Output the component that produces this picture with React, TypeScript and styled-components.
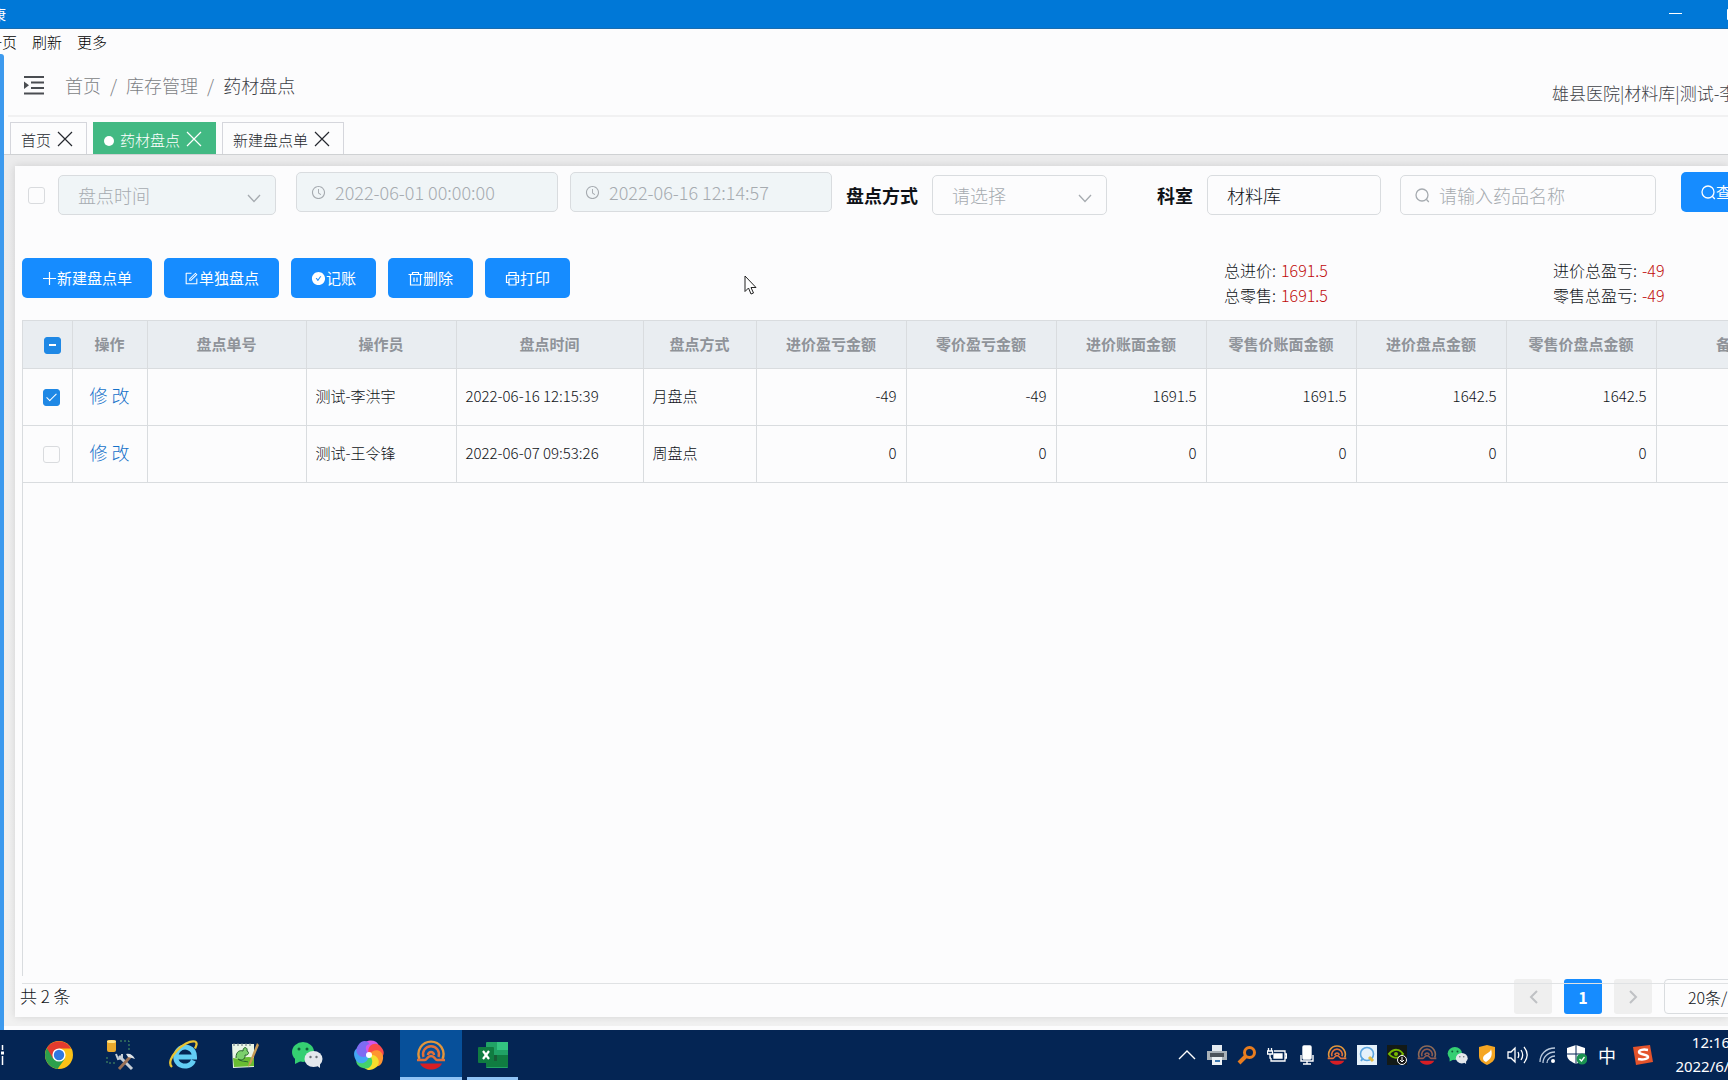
import React from 'react';
import styled, { createGlobalStyle, css } from 'styled-components';
import { AiOutlineForm, AiFillCheckCircle, AiOutlineClockCircle } from 'react-icons/ai';

const blue = '#168cff';
const line = '#d9dcdf';
const muted = '#a6abb0';

const GlobalStyle = createGlobalStyle`
  *, *::before, *::after { box-sizing: border-box; }
  body {
    margin: 0;
    background: #fcfcfd;
    color: #0f1217;
    font-family: "Noto Sans CJK SC", "Noto Sans", sans-serif;
    font-size: 15px;
    font-weight: 300;
    line-height: 24px;
  }
  button, input, select { font: inherit; color: inherit; margin: 0; }
`;

const Shell = styled.div`
  display: flex;
  flex-direction: column;
  min-height: 100vh;
  overflow: hidden;
  white-space: nowrap;
`;

const TitleBar = styled.header`
  display: flex;
  justify-content: space-between;
  align-items: center;
  height: 29px;
  background: #0078d7;
  color: #fff;
  font-weight: 400;
  border-bottom: 1px solid #1a6cae;
`;
const WindowTitle = styled.span`
  margin-left: -9px;
`;
const WindowButtons = styled.div`
  display: flex;
  align-items: center;
  gap: 45px;
  margin-right: -12px;
`;
const WindowButton = styled.button`
  display: flex;
  padding: 0;
  border: 0;
  background: none;
`;

const MenuBar = styled.nav`
  display: flex;
  align-items: center;
  gap: 15px;
  height: 25px;
  margin-left: -28px;
`;
const MenuItem = styled.button`
  padding: 0;
  border: 0;
  background: none;
  color: #000;
`;

const Workspace = styled.div`
  display: flex;
  flex: 1;
`;
const SideStrip = styled.aside`
  flex: none;
  width: 4px;
  background: #3d9aee;
  border-top-right-radius: 3px;
`;
const Main = styled.main`
  display: flex;
  flex-direction: column;
  flex: 1;
  min-width: 0;
`;

const PageHeader = styled.div`
  display: flex;
  align-items: center;
  gap: 20px;
  height: 63px;
  margin-left: 4px;
  padding: 1px 0 0 16px;
  border-bottom: 2px solid #f1f1f2;
`;
const IconButton = styled.button`
  display: flex;
  padding: 0;
  border: 0;
  background: none;
  color: #4a4d52;
`;
const Breadcrumb = styled.ol`
  display: flex;
  flex: 1;
  gap: 9px;
  margin: 0;
  padding: 0;
  list-style: none;
  font-size: 18px;
`;
const Crumb = styled.li<{ $current?: boolean }>`
  display: flex;
  gap: 9px;
  color: ${p => (p.$current ? '#3d4046' : '#7c7f85')};
  &:not(:last-child)::after { content: "/"; }
  a { color: inherit; text-decoration: none; }
`;
const UserName = styled.span`
  flex: none;
  width: 176px;
  padding-top: 16px;
  font-size: 17px;
  color: #3f4248;
`;

const TabBar = styled.div`
  display: flex;
  align-items: flex-end;
  gap: 6px;
  height: 38px;
  padding-left: 6px;
  border-bottom: 1px solid #cfd1d3;
`;
const Tab = styled.div<{ $active?: boolean }>`
  display: flex;
  align-items: center;
  gap: 6px;
  height: 32px;
  padding: 3px 13px 0 10px;
  border: 1px solid ${p => (p.$active ? '#42b983' : '#d5d6dc')};
  border-bottom-width: 0;
  background: ${p => (p.$active ? '#42b983' : '#fcfcfd')};
  color: ${p => (p.$active ? '#fff' : '#25282e')};
`;
const Dot = styled.span`
  width: 10px;
  height: 10px;
  margin-top: 2px;
  border-radius: 50%;
  background: #fff;
`;
const CloseButton = styled.button`
  display: flex;
  padding: 0 0 3px;
  border: 0;
  background: none;
`;

const Content = styled.div`
  display: flex;
  flex: 1;
  padding: 11px 0 9px 11px;
  margin-bottom: 4px;
  background: linear-gradient(#ebebec, #f1f1f1);
`;
const Card = styled.section`
  display: flex;
  flex-direction: column;
  flex: 1;
  min-width: 0;
  padding: 6px 0 3px 7px;
  background: #fcfcfd;
  box-shadow: 0 0 8px rgba(0, 0, 0, 0.12);
`;

const Filters = styled.form`
  display: flex;
  height: 86px;
  padding-left: 6px;
  font-size: 18px;
`;
const Lowered = styled.div`
  display: flex;
  align-items: center;
  flex: none;
  height: 40px;
  margin-top: 3px;
`;
const FieldLabel = styled.label`
  margin: 0 14px;
  font-weight: 700;
`;
const Field = styled.div<{ $width: number; $disabled?: boolean }>`
  display: flex;
  align-items: center;
  flex: none;
  gap: 9px;
  width: ${p => p.$width}px;
  height: 40px;
  padding-left: 14px;
  border: 1px solid ${line};
  border-radius: 5px;
  background: ${p => (p.$disabled ? '#f0f5f7' : '#fcfcfd')};
  color: ${muted};
  svg { flex: none; }
`;
const TextInput = styled.input`
  flex: 1;
  min-width: 0;
  padding: 0;
  border: 0;
  outline: 0;
  background: none;
  &:disabled { color: ${muted}; }
  &::placeholder { color: ${muted}; opacity: 1; }
`;
const PlainInput = styled.input`
  width: 174px;
  height: 40px;
  padding: 0 19px;
  border: 1px solid ${line};
  border-radius: 5px;
  background: #fcfcfd;
`;
const SelectBox = styled.div<{ $width: number }>`
  display: grid;
  align-items: center;
  width: ${p => p.$width}px;
  > * { grid-area: 1 / 1; }
  > svg { justify-self: end; margin: 6px 15px 0 0; pointer-events: none; color: ${muted}; }
`;
const Select = styled.select`
  width: 100%;
  height: 40px;
  padding: 0 19px;
  border: 1px solid ${line};
  border-radius: 5px;
  appearance: none;
  background: #fcfcfd;
  color: ${muted};
  opacity: 1;
  &:disabled { background: #f0f5f7; opacity: 1; }
`;
const Gap = styled.div<{ $w: number }>`
  flex: none;
  width: ${p => p.$w}px;
`;

const Check = styled.input<{ $partial?: boolean }>`
  display: grid;
  place-items: center;
  flex: none;
  width: 17px;
  height: 17px;
  appearance: none;
  border: 1px solid #d9dbde;
  border-radius: 3px;
  background: #fcfcfd;
  &:checked { background: #1f88e5; border-color: #1f88e5; }
  &:checked::after {
    content: "";
    width: 5px;
    height: 10px;
    margin-bottom: 3px;
    border: solid #fff;
    border-width: 0 1px 1px 0;
    transform: rotate(45deg);
  }
  ${p => p.$partial && css`
    background: #1f88e5;
    border-color: #1f88e5;
    &::after { content: ""; width: 7px; height: 2px; background: #fff; }
  `}
`;

const PrimaryButton = styled.button`
  display: flex;
  align-items: center;
  flex: none;
  height: 40px;
  padding: 0 20px;
  border: 0;
  border-radius: 5px;
  background: ${blue};
  color: #fff;
  font-size: 15px;
  font-weight: 400;
`;

const Toolbar = styled.div`
  display: flex;
  align-items: center;
  height: 40px;
  margin-bottom: 22px;
`;
const Actions = styled.div`
  display: flex;
  flex: 1;
  gap: 12px;
`;
const Totals = styled.dl<{ $width: number }>`
  flex: none;
  width: ${p => p.$width}px;
  margin: 10px 0 0;
  font-size: 16px;
  line-height: 25px;
  div { display: flex; gap: 5px; }
  dd { margin: 0; color: #c00a0a; }
`;

const TableArea = styled.div`
  position: relative;
  z-index: 1;
  display: flex;
  flex: 1;
  padding-bottom: 7px;
  border-bottom: 1px solid #e0e2e4;
  pointer-events: none;
`;
const TableScroll = styled.div`
  flex: 1;
  min-width: 0;
  overflow: hidden;
  border-left: 1px solid ${line};
  pointer-events: auto;
`;
const Table = styled.table`
  width: 100%;
  min-width: 1783px;
  table-layout: fixed;
  border-collapse: collapse;
  th, td { border-right: 1px solid ${line}; border-bottom: 1px solid ${line}; }
`;
const Th = styled.th`
  height: 48px;
  padding: 0 0 2px;
  border-top: 1px solid ${line};
  background: #e9edf1;
  color: #8f9399;
  font-weight: 700;
`;
const Td = styled.td<{ $align?: string }>`
  height: 57px;
  padding: 0 9px 3px;
  text-align: ${p => p.$align || 'left'};
`;
const CheckCell = styled.div<{ $head?: boolean }>`
  display: flex;
  padding: 3px 0 0 ${p => (p.$head ? 21 : 11)}px;
`;
const EditLink = styled.a`
  color: #1571c9;
  font-size: 18px;
  text-decoration: none;
`;

const Footer = styled.footer`
  display: flex;
  align-items: center;
  height: 35px;
  margin-top: -5px;
  font-size: 16px;
`;
const Count = styled.span`
  flex: 1;
  margin-left: -2px;
  padding-bottom: 2px;
  font-size: 17px;
`;
const Pager = styled.nav`
  display: flex;
  flex: none;
  gap: 12px;
  width: 214px;
`;
const PageButton = styled.button<{ $active?: boolean }>`
  display: flex;
  align-items: center;
  justify-content: center;
  flex: none;
  width: 38px;
  height: 35px;
  padding: 0;
  border: 0;
  border-radius: 3px;
  background: ${p => (p.$active ? blue : '#efefef')};
  color: ${p => (p.$active ? '#fff' : '#bfc1c4')};
  font-weight: 700;
`;
const PageSize = styled.select`
  flex: none;
  width: 125px;
  height: 35px;
  padding-left: 23px;
  border: 1px solid ${line};
  border-radius: 4px;
  appearance: none;
  background: #fcfcfd;
`;

const Taskbar = styled.footer`
  display: flex;
  align-items: center;
  justify-content: space-between;
  height: 50px;
  background: #042554;
  color: #fff;
`;
const Apps = styled.div`
  display: flex;
  height: 50px;
`;
const AppButton = styled.button<{ $active?: boolean; $open?: boolean; $width?: number }>`
  display: flex;
  align-items: center;
  justify-content: center;
  width: ${p => p.$width || 62}px;
  padding: 0;
  border: 0;
  background: ${p => (p.$active ? '#07509a' : 'none')};
  ${p => (p.$active || p.$open) && css`border-bottom: 3px solid #8fc3f5; padding-top: 3px;`}
`;
const Tray = styled.div`
  display: flex;
  align-items: center;
  margin-right: -21px;
`;
const TrayIcon = styled.button<{ $wide?: boolean }>`
  display: flex;
  align-items: center;
  justify-content: center;
  width: ${p => (p.$wide ? 42 : 30)}px;
  padding: 0;
  border: 0;
  background: none;
  font-size: 18px;
  font-weight: 400;
`;
const Clock = styled.time`
  width: 76px;
  margin-left: 9px;
  padding-bottom: 2px;
  text-align: center;
  font-family: "Noto Sans", sans-serif;
  font-size: 15px;
  font-weight: 400;
`;
const Pointer = styled.svg`
  position: absolute;
  left: 744px;
  top: 275px;
`;

const CloseIcon = () => (
  <svg width="16" height="16" viewBox="0 0 16 16" fill="none" stroke="currentColor" strokeWidth="1.2">
    <path d="M1 1l14 14M15 1L1 15" />
  </svg>
);
const ChevronIcon = () => (
  <svg width="14" height="9" viewBox="0 0 14 9" fill="none" stroke="currentColor" strokeWidth="1.3">
    <path d="M1 1l6 6.5L13 1" />
  </svg>
);
const SearchIcon = () => (
  <svg width="15" height="15" viewBox="0 0 15 15" fill="none" stroke="currentColor" strokeWidth="1.3">
    <circle cx="7" cy="7" r="6" />
    <path d="M11.3 11.3l2.5 2.7" />
  </svg>
);
const PlusIcon = () => (
  <svg width="15" height="15" viewBox="0 0 15 15" fill="none" stroke="currentColor" strokeWidth="1.2">
    <path d="M7.500 1v13M1 7.500h13" />
  </svg>
);
const EditIcon = () => <AiOutlineForm size={15} />;
const DoneIcon = () => <AiFillCheckCircle size={15} />;
const TrashIcon = () => (
  <svg width="15" height="15" viewBox="0 0 15 15" fill="none" stroke="currentColor" strokeWidth="1.2">
    <path d="M.5 3.500h14M4.500 3.500v-2h6v2M2.500 3.500v10.500h10V3.500M6 6.500v4.500M9 6.500v4.500" />
  </svg>
);
const PrintIcon = () => (
  <svg width="15" height="15" viewBox="0 0 15 15" fill="none" stroke="currentColor" strokeWidth="1.2">
    <path d="M4 4V1.500h7V4M3.500 11.500H1.500v-7h12v7h-2M4 8h7v6H4zM9.500 6.300h2" />
  </svg>
);
const FoldIcon = () => (
  <svg width="21" height="19" viewBox="0 0 21 19" fill="currentColor">
    <path d="M0 0h20v2H0zM7 5.500h13v2H7zM7 11h13v2H7zM0 16.500h20v2H0zM0 5.500l5 3.700-5 3.800z" />
  </svg>
);
const ArrowIcon = ({ back }: { back?: boolean }) => (
  <svg width="9" height="14" viewBox="0 0 9 14" fill="none" stroke="currentColor" strokeWidth="2">
    <path d={back ? 'M8 1L2 7l6 6' : 'M1 1l6 6-6 6'} />
  </svg>
);

const ChromeIcon = () => (
  <svg width="28" height="28" viewBox="0 0 28 28">
    <circle cx="14" cy="14" r="14" fill="#fbc116" />
    <path d="M14 14L1.900 7A14 14 0 0 0 12.500 27.900L20 17.500z" fill="#2da04c" />
    <path d="M1.900 7A14 14 0 0 1 26.200 7.500H14L8 17.500z" fill="#e33b2e" />
    <circle cx="14" cy="14" r="6.600" fill="#fff" />
    <circle cx="14" cy="14" r="5.200" fill="#2f78e0" />
  </svg>
);
const ToolsIcon = () => (
  <svg width="30" height="32" viewBox="0 0 30 32" fill="none">
    <path d="M14 2h9v10M1 18v6h9" stroke="#4f9a62" strokeDasharray="2 2" />
    <rect x="1" y="1" width="9" height="12" rx="2" fill="#eaa92c" />
    <ellipse cx="5.500" cy="2.500" rx="4.500" ry="1.500" fill="#ffe48a" />
    <path d="M13 17l13 13" stroke="#c7ced6" strokeWidth="3" />
    <path d="M10 15l2 5 4-1 0-4" stroke="#c7ced6" strokeWidth="2" />
    <path d="M25 17L13 30" stroke="#9a7056" strokeWidth="3" />
    <path d="M20 15c4-1 7 1 9 5l-3-1-4-1z" fill="#dfe4e9" />
  </svg>
);
const IeIcon = () => (
  <svg width="30" height="30" viewBox="0 0 30 30" fill="none">
    <path d="M25.500 20.500c-2 5-8 7-13 4.500-6-3-6-11-2-15 6-6 16-2 16 7H9" stroke="#62cdf4" strokeWidth="5" />
    <path d="M4 27C-4 20 17-1 27 1.500c3 1 1 5 0 7" stroke="#e9c332" strokeWidth="2.300" />
  </svg>
);
const NotepadIcon = () => (
  <svg width="28" height="28" viewBox="0 0 28 28">
    <path d="M1 3h22v23L2 27z" fill="#e9f5e6" />
    <path d="M2 17c7 2 13-3 21 0v8L3 26z" fill="#69bd32" />
    <path d="M3 2v3M7 2v3M11 2v3M15 2v3M19 2v3" stroke="#60717a" />
    <path d="M5 17c0-7 4-8 7-7 0-5 5-4 4 0 3 1 1 5-2 4 1 5-5 6-7 4 4 3 8 2 10 3" fill="#7bd06c" stroke="#26622c" />
    <path d="M26 2l-8 20-1 4 3-3 8-19z" fill="#c79b55" />
  </svg>
);
const WechatIcon = ({ size }: { size: number }) => (
  <svg width={size} height={size} viewBox="0 0 32 32">
    <ellipse cx="12" cy="13" rx="11" ry="10" fill="#35cf72" />
    <path d="M4 18l0 7 6-3z" fill="#35cf72" />
    <ellipse cx="22.500" cy="20" rx="9" ry="8" fill="#e4e8ec" />
    <path d="M25 26l4 3v-5z" fill="#e4e8ec" />
    <circle cx="8" cy="10" r="1.500" fill="#12613a" />
    <circle cx="16" cy="10" r="1.500" fill="#12613a" />
    <circle cx="19.500" cy="18" r="1.200" fill="#6b7278" />
    <circle cx="25.500" cy="18" r="1.200" fill="#6b7278" />
  </svg>
);
const PinwheelIcon = () => (
  <svg width="30" height="30" viewBox="-15 -15 30 30">
    {['#d657e8', '#fb4b4b', '#ff9530', '#f6dd2c', '#45d16a', '#43a6f5', '#7e6cf2'].map((fill, i) => (
      <path key={fill} d="M0 0C-9-3-8-14 1-14.500C9-15 11-9 9-6C7-9 2-8 0 0z" fill={fill} transform={`rotate(${i * 51})`} />
    ))}
    <circle r="3" fill="#fff" />
  </svg>
);
const HospitalIcon = ({ size, dim }: { size: number; dim?: boolean }) => (
  <svg width={size} height={size} viewBox="0 0 28 30" fill="none" stroke={dim ? '#8d5a50' : '#e0703a'} strokeWidth="2.400">
    <path d="M2.500 19a12.500 12.500 0 1 1 23 0" stroke={dim ? '#8d6a58' : '#e2963c'} />
    <path d="M6.500 17a8 8 0 1 1 15 0M0 20h8c2 0 2-4 6-4s4 4 6 4h8" />
    <path d="M11 15a3 3 0 0 1 6 0" />
    <path d="M3 23.500h22c-4 8-18 8-22 0z" fill="#d81e24" stroke="none" />
  </svg>
);
const ExcelIcon = () => (
  <svg width="30" height="28" viewBox="0 0 30 28">
    <rect x="8" y="1" width="22" height="26" rx="1" fill="#21a366" />
    <path d="M19 1h11v8H19z" fill="#33c481" />
    <path d="M8 14h22v12H8z" fill="#107c41" />
    <path d="M8 14h11v6H8z" fill="#185c37" />
    <rect y="6" width="16" height="16" rx="1" fill="#107c41" />
    <path d="M5 10l6 8M11 10l-6 8" stroke="#fff" strokeWidth="2.200" />
  </svg>
);
const TrayChevron = () => (
  <svg width="18" height="10" viewBox="0 0 18 10" fill="none" stroke="#fff" strokeWidth="1.400"><path d="M1 9l8-8 8 8" /></svg>
);
const TrayPrinter = () => (
  <svg width="20" height="20" viewBox="0 0 20 20">
    <path d="M5 0h10v6H5z" fill="#e4eaf0" /><path d="M0 6h20v9H0z" fill="#a9b1b8" />
    <path d="M3 8h14v4H3z" fill="#4c545c" /><path d="M5 12h10v8H5z" fill="#eef2f5" /><path d="M8 15h5v2H8z" fill="#3c78b0" />
  </svg>
);
const TrayKey = () => (
  <svg width="20" height="20" viewBox="0 0 20 20" fill="none" stroke="#e97d1f" strokeWidth="3">
    <circle cx="12.500" cy="7.500" r="5" /><path d="M9 11l-7 7" strokeWidth="4" />
  </svg>
);
const TrayBattery = () => (
  <svg width="20" height="14" viewBox="0 0 20 14" fill="none" stroke="#fff" strokeWidth="1.300">
    <path d="M7 3h11v10H4v-3M18 6h1.500v4H18M1.500 0v3M4.500 0v3M.5 3h5v3h-5zM3 6v4h1" /><path d="M7 6h8v4H7z" fill="#fff" />
  </svg>
);
const TrayMic = () => (
  <svg width="14" height="20" viewBox="0 0 14 20" fill="none" stroke="#fff" strokeWidth="1.400">
    <rect x="3" y="1" width="8" height="13" rx="1" fill="#fff" /><path d="M1 10v6h12v-6M7 16v3M3 19h8" />
  </svg>
);
const TrayQuery = () => (
  <svg width="20" height="20" viewBox="0 0 20 20" fill="none">
    <path d="M0 0h20v20H0z" fill="#e5f1fb" /><circle cx="10" cy="9" r="6.500" stroke="#5ba5df" strokeWidth="1.600" />
    <path d="M4 16l2-3" stroke="#5ba5df" strokeWidth="2" /><path d="M12 12l4 4" stroke="#e5bd43" strokeWidth="3" />
  </svg>
);
const TrayGpu = () => (
  <svg width="20" height="20" viewBox="0 0 20 20" fill="none">
    <path d="M0 0h20v20H0z" fill="#131a17" /><path d="M2 9c5-6 11-5 14 0-4 5-10 5-14 0z" stroke="#77b900" strokeWidth="2" />
    <circle cx="9" cy="9" r="2" fill="#77b900" /><circle cx="15" cy="15" r="4.500" fill="#111" stroke="#fff" /><path d="M15 12v5M13 15l2 2 2-2" stroke="#fff" />
  </svg>
);
const TrayShield = () => (
  <svg width="18" height="20" viewBox="0 0 18 20"><path d="M9 0l8 2v9c0 5-4 7-8 9-4-2-8-4-8-9V2z" fill="#f5a623" /><path d="M13 4c0 4-8 5-8 9 0 2 1 3 3 4 5-3 7-7 5-13z" fill="#fff" /></svg>
);
const TrayVolume = () => (
  <svg width="21" height="18" viewBox="0 0 21 18" fill="none" stroke="#fff" strokeWidth="1.300">
    <path d="M1 6h3l4-4v14l-4-4H1zM11 6c1 2 1 4 0 6M14 4c2 3 2 7 0 10M17 1c4 5 4 11 0 16" />
  </svg>
);
const TrayWifi = () => (
  <svg width="17" height="17" viewBox="0 0 17 17" fill="none" stroke="#b9c8dc" strokeWidth="1.300">
    <path d="M1 15C1 7 7 1 16 1M4 16C4 10 9 5 16 5M8 16c0-4 4-7 8-7" /><circle cx="14" cy="14" r="2" fill="#fff" stroke="none" />
  </svg>
);
const TrayDefender = () => (
  <svg width="20" height="20" viewBox="0 0 20 20" fill="none">
    <path d="M9 0l9 3v7c0 5-5 7-9 9-4-2-9-4-9-9V3z" fill="#fff" /><path d="M9 0v19M0 9h18" stroke="#042554" />
    <circle cx="15" cy="14" r="5.500" fill="#1b9351" /><path d="M12.500 14l2 2 3-4" stroke="#fff" strokeWidth="1.300" />
  </svg>
);
const TraySogou = () => (
  <svg width="20" height="20" viewBox="0 0 20 20" fill="none">
    <path d="M0 2l17-2 3 17-17 3z" fill="#e4532b" /><path d="M15 5c-5-1-9 0-9 2 0 3 9 2 9 5 0 2-5 3-10 2" stroke="#fff" strokeWidth="2.500" />
  </svg>
);

const columns = [
  { title: '操作', width: 75 },
  { title: '盘点单号', width: 159 },
  { title: '操作员', width: 150 },
  { title: '盘点时间', width: 187 },
  { title: '盘点方式', width: 113 },
  { title: '进价盈亏金额', width: 150 },
  { title: '零价盈亏金额', width: 150 },
  { title: '进价账面金额', width: 150 },
  { title: '零售价账面金额', width: 150 },
  { title: '进价盘点金额', width: 150 },
  { title: '零售价盘点金额', width: 150 },
  { title: '备注', width: 150 },
];

const rows = [
  { checked: true, who: '测试-李洪宇', time: '2022-06-16 12:15:39', mode: '月盘点', sums: ['-49', '-49', '1691.5', '1691.5', '1642.5', '1642.5'] },
  { checked: false, who: '测试-王令锋', time: '2022-06-07 09:53:26', mode: '周盘点', sums: ['0', '0', '0', '0', '0', '0'] },
];

const actions = [
  { text: '新建盘点单', Icon: PlusIcon },
  { text: '单独盘点', Icon: EditIcon },
  { text: '记账', Icon: DoneIcon },
  { text: '删除', Icon: TrashIcon },
  { text: '打印', Icon: PrintIcon },
];

const trayIcons: [string, React.ReactNode][] = [
  ['更多图标', <TrayChevron />],
  ['打印机', <TrayPrinter />],
  ['密钥', <TrayKey />],
  ['电源', <TrayBattery />],
  ['麦克风', <TrayMic />],
  ['医院系统', <HospitalIcon size={20} />],
  ['查询', <TrayQuery />],
  ['显卡', <TrayGpu />],
  ['医院服务', <HospitalIcon size={20} dim />],
  ['微信', <WechatIcon size={21} />],
  ['安全', <TrayShield />],
  ['音量', <TrayVolume />],
  ['网络', <TrayWifi />],
  ['防护', <TrayDefender />],
];

function FilterBar() {
  return (
    <Filters onSubmit={e => e.preventDefault()}>
      <Lowered>
        <Check type="checkbox" aria-label="按时间筛选" />
        <Gap $w={13} />
        <SelectBox $width={218}>
          <Select disabled aria-label="时间类型"><option>盘点时间</option></Select>
          <ChevronIcon />
        </SelectBox>
      </Lowered>
      <Gap $w={20} />
      <Field $width={262} $disabled>
        <AiOutlineClockCircle size={15} />
        <TextInput disabled aria-label="开始时间" defaultValue="2022-06-01 00:00:00" />
      </Field>
      <Gap $w={12} />
      <Field $width={262} $disabled>
        <AiOutlineClockCircle size={15} />
        <TextInput disabled aria-label="结束时间" defaultValue="2022-06-16 12:14:57" />
      </Field>
      <Lowered>
        <FieldLabel htmlFor="mode">盘点方式</FieldLabel>
        <SelectBox $width={175}>
          <Select id="mode"><option>请选择</option></Select>
          <ChevronIcon />
        </SelectBox>
        <Gap $w={36} />
        <FieldLabel htmlFor="dept">科室</FieldLabel>
        <PlainInput id="dept" defaultValue="材料库" />
        <Gap $w={19} />
        <Field $width={256}>
          <SearchIcon />
          <TextInput aria-label="药品名称" placeholder="请输入药品名称" />
        </Field>
      </Lowered>
      <Gap $w={25} />
      <PrimaryButton type="submit"><SearchIcon />查询</PrimaryButton>
    </Filters>
  );
}

export default function App() {
  return (
    <Shell>
      <GlobalStyle />
      <TitleBar>
        <WindowTitle>康</WindowTitle>
        <WindowButtons>
          <WindowButton aria-label="最小化">
            <svg width="13" height="12" stroke="#fff"><path d="M0 5.500h13" /></svg>
          </WindowButton>
          <WindowButton aria-label="最大化">
            <svg width="13" height="12" fill="none" stroke="#fff"><path d="M.5 1.500h11v10H.5z" /></svg>
          </WindowButton>
        </WindowButtons>
      </TitleBar>
      <MenuBar>
        <MenuItem>上一页</MenuItem>
        <MenuItem>刷新</MenuItem>
        <MenuItem>更多</MenuItem>
      </MenuBar>

      <Workspace>
        <SideStrip />
        <Main>
          <PageHeader>
            <IconButton aria-label="展开菜单"><FoldIcon /></IconButton>
            <Breadcrumb>
              <Crumb><a href="#home">首页</a></Crumb>
              <Crumb><a href="#stock">库存管理</a></Crumb>
              <Crumb $current>药材盘点</Crumb>
            </Breadcrumb>
            <UserName>雄县医院|材料库|测试-李洪宇</UserName>
          </PageHeader>
          <TabBar>
            <Tab>首页<CloseButton aria-label="关闭首页"><CloseIcon /></CloseButton></Tab>
            <Tab $active><Dot />药材盘点<CloseButton aria-label="关闭药材盘点"><CloseIcon /></CloseButton></Tab>
            <Tab>新建盘点单<CloseButton aria-label="关闭新建盘点单"><CloseIcon /></CloseButton></Tab>
          </TabBar>

          <Content>
            <Card>
              <FilterBar />
              <Toolbar>
                <Actions>
                  {actions.map(({ text, Icon }) => (
                    <PrimaryButton key={text} type="button"><Icon />{text}</PrimaryButton>
                  ))}
                </Actions>
                <Totals $width={329}>
                  <div><dt>总进价:</dt><dd>1691.5</dd></div>
                  <div><dt>总零售:</dt><dd>1691.5</dd></div>
                </Totals>
                <Totals $width={175}>
                  <div><dt>进价总盈亏:</dt><dd>-49</dd></div>
                  <div><dt>零售总盈亏:</dt><dd>-49</dd></div>
                </Totals>
              </Toolbar>

              <TableArea>
                <TableScroll>
                  <Table>
                    <colgroup>
                      <col style={{ width: 49 }} />
                      {columns.map(c => <col key={c.title} style={{ width: c.width }} />)}
                    </colgroup>
                    <thead>
                      <tr>
                        <Th><CheckCell $head><Check type="checkbox" $partial aria-label="全选" /></CheckCell></Th>
                        {columns.map(c => <Th key={c.title}>{c.title}</Th>)}
                      </tr>
                    </thead>
                    <tbody>
                      {rows.map(r => (
                        <tr key={r.time}>
                          <Td><CheckCell><Check type="checkbox" defaultChecked={r.checked} aria-label={r.who} /></CheckCell></Td>
                          <Td $align="center"><EditLink href="#edit">修 改</EditLink></Td>
                          <Td />
                          <Td>{r.who}</Td>
                          <Td>{r.time}</Td>
                          <Td>{r.mode}</Td>
                          {r.sums.map((s, i) => <Td key={i} $align="right">{s}</Td>)}
                          <Td />
                        </tr>
                      ))}
                    </tbody>
                  </Table>
                </TableScroll>
              </TableArea>

              <Footer>
                <Count>共 2 条</Count>
                <Pager aria-label="分页">
                  <PageButton aria-label="上一页" disabled><ArrowIcon back /></PageButton>
                  <PageButton $active>1</PageButton>
                  <PageButton aria-label="下一页" disabled><ArrowIcon /></PageButton>
                  <PageSize aria-label="每页条数"><option>20条/页</option></PageSize>
                </Pager>
              </Footer>
            </Card>
          </Content>
        </Main>
      </Workspace>

      <Taskbar>
        <Apps>
          <AppButton $width={28} aria-label="任务视图">
            <svg width="28" height="20" stroke="#fff" strokeWidth="1.500"><path d="M2.500 0v5M2.500 11v9" /><path d="M1 6.500h3v3H1z" fill="#fff" stroke="none" /></svg>
          </AppButton>
          <AppButton aria-label="浏览器"><ChromeIcon /></AppButton>
          <AppButton aria-label="数据库工具"><ToolsIcon /></AppButton>
          <AppButton aria-label="网页"><IeIcon /></AppButton>
          <AppButton aria-label="记事本"><NotepadIcon /></AppButton>
          <AppButton aria-label="微信"><WechatIcon size={32} /></AppButton>
          <AppButton aria-label="相册"><PinwheelIcon /></AppButton>
          <AppButton $active aria-label="医院系统"><HospitalIcon size={30} /></AppButton>
          <Gap $w={5} />
          <AppButton $open $width={51} aria-label="表格"><ExcelIcon /></AppButton>
        </Apps>
        <Tray>
          {trayIcons.map(([name, icon]) => <TrayIcon key={name} aria-label={name}>{icon}</TrayIcon>)}
          <TrayIcon>中</TrayIcon>
          <TrayIcon $wide aria-label="输入法"><TraySogou /></TrayIcon>
          <Clock>12:16<br />2022/6/16</Clock>
        </Tray>
      </Taskbar>

      <Pointer width="14" height="20" viewBox="0 0 14 20" fill="#fff" stroke="#222">
        <path d="M1 1v15.500l3.500-3.500 2.500 6 2.500-1-2.500-5.500h5z" />
      </Pointer>
    </Shell>
  );
}
